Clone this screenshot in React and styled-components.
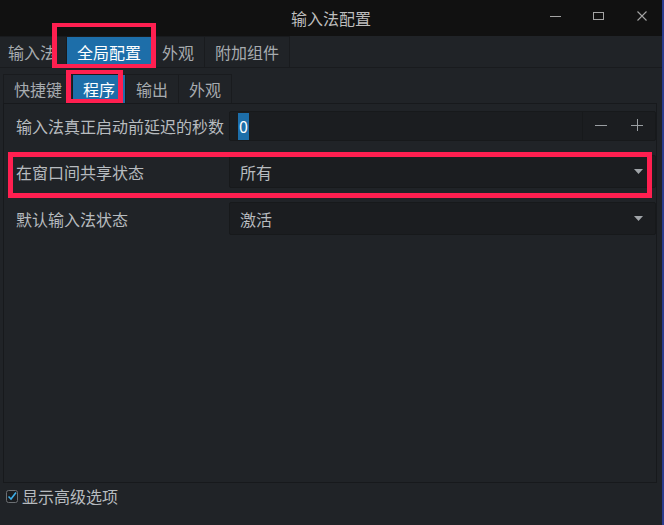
import React from "react";
import styled, { createGlobalStyle } from "styled-components";

const Global = createGlobalStyle`
  html, body { margin: 0; padding: 0; background: #202327; overflow: hidden; }
  #root { width: 664px; height: 525px; }
  * { box-sizing: border-box; }
`;

const Screen = styled.div`
  display: flex;
  width: 664px;
  height: 525px;
  font-family: "Noto Sans CJK SC", "Noto Sans", sans-serif;
  font-size: 16px;
`;

const Window = styled.div`
  position: relative;
  width: 662px;
  height: 525px;
  background: #202327;
  display: flex;
  flex-direction: column;
  overflow: hidden;
`;

const DesktopEdge = styled.div`
  width: 2px;
  background: #2a3b8e;
`;

const TitleBar = styled.div`
  height: 36px;
  flex: none;
  background: #111111;
  display: grid;
  grid-template-columns: 1fr auto 1fr;
  align-items: center;
`;

const Title = styled.div`
  grid-column: 2;
  color: #bdbdbd;
  line-height: 1;
  margin-top: 0px;
`;

const Controls = styled.div`
  grid-column: 3;
  justify-self: end;
  display: flex;
  gap: 2px;
  height: 36px;
`;

const CtrlButton = styled.div`
  width: 41px;
  display: flex;
  align-items: center;
  justify-content: center;
  padding-bottom: 4px;
  color: #a4a4a4;
`;

const TopTabBar = styled.div`
  height: 32px;
  flex: none;
  display: flex;
  align-items: flex-end;
  margin-left: -2px;
  border-bottom: 1px solid #191b1e;
`;

const Tab = styled.div`
  height: ${(p) => p.$h}px;
  display: flex;
  align-items: center;
  padding: 0 10px;
  border-top: 1px solid #191b1e;
  border-right: 1px solid #191b1e;
  color: ${(p) => (p.$active ? "#ffffff" : "#a7abaf")};
  background: ${(p) => (p.$active ? "#1d6ea9" : "transparent")};
  white-space: nowrap;
  line-height: 1;
`;

const Page = styled.div`
  flex: none;
  display: flex;
  flex-direction: column;
  padding: 0 5px 0 3px;
`;

const SubTabBar = styled.div`
  height: 35px;
  display: flex;
  align-items: flex-end;
  & > :first-child { border-left: 1px solid #191b1e; }
`;

const Panel = styled.div`
  height: 380px;
  border: 1px solid #17191c;
  padding: 7px 0 0 12px;
  display: grid;
  grid-template-columns: 213px 1fr;
  grid-auto-rows: min-content;
  row-gap: 14px;
  align-items: center;
`;

const Label = styled.div`
  color: #b7bbbf;
  white-space: nowrap;
  line-height: 1;
`;

const Field = styled.div`
  height: ${(p) => p.$h}px;
  display: flex;
  align-items: center;
  background: #1b1d20;
  border: 1px solid #17191b;
  border-radius: 2px;
  color: #b7bbbf;
`;

const SpinValue = styled.div`
  flex: 1;
  align-self: stretch;
  display: flex;
  align-items: center;
  padding-left: 8px;
`;

const Selection = styled.span`
  background: #1d6ea9;
  color: #ffffff;
  height: 27px;
  display: flex;
  align-items: center;
  padding: 0 1px;
  line-height: 1;
`;

const SpinButtons = styled.div`
  align-self: stretch;
  display: flex;
  border-left: 1px solid #17191b;
`;

const SpinButton = styled.div`
  width: 36px;
  display: flex;
  align-items: center;
  justify-content: center;
  color: #9a9ea2;
  padding-bottom: 2px;
`;

const ComboText = styled.div`
  flex: 1;
  padding-left: 10px;
  line-height: 1;
`;

const ComboArrow = styled.div`
  padding-right: 12px;
  display: flex;
  align-items: center;
  color: #a0a4a8;
`;

const Footer = styled.div`
  flex: 1;
  display: flex;
  align-items: flex-start;
  padding: 7px 0 0 6px;
  gap: 4px;
  color: #b7bbbf;
`;

const CheckLabel = styled.div`
  line-height: 13px;
  white-space: nowrap;
`;

const Annotation = styled.div`
  position: absolute;
  left: ${(p) => p.$x}px;
  top: ${(p) => p.$y}px;
  width: ${(p) => p.$w}px;
  height: ${(p) => p.$h}px;
  border-style: solid;
  border-color: #ff1f50;
  border-width: ${(p) => p.$bw};
  pointer-events: none;
`;

const Arrow = () => (
  <svg width="9" height="5" viewBox="0 0 9 5">
    <path d="M0 0 H9 L4.5 5 Z" fill="currentColor" />
  </svg>
);

const Combo = ({ children }) => (
  <Field $h={33}>
    <ComboText>{children}</ComboText>
    <ComboArrow>
      <Arrow />
    </ComboArrow>
  </Field>
);

export default function App() {
  return (
    <>
      <Global />
      <Screen>
        <Window>
          <TitleBar>
            <Title>输入法配置</Title>
            <Controls>
              <CtrlButton>
                <svg width="11" height="11" viewBox="0 0 11 11">
                  <path d="M0 5.5 H11" stroke="currentColor" strokeWidth="1" />
                </svg>
              </CtrlButton>
              <CtrlButton>
                <svg width="11" height="9" viewBox="0 0 11 9">
                  <rect x="0.5" y="0.5" width="10" height="7" fill="none" stroke="currentColor" strokeWidth="1" />
                </svg>
              </CtrlButton>
              <CtrlButton>
                <svg width="10" height="10" viewBox="0 0 10 10">
                  <path d="M0.5 0.5 L9.5 9.5 M9.5 0.5 L0.5 9.5" stroke="currentColor" strokeWidth="1.1" />
                </svg>
              </CtrlButton>
            </Controls>
          </TitleBar>

          <TopTabBar>
            <Tab $h={31}>输入法</Tab>
            <Tab $h={31} $active>全局配置</Tab>
            <Tab $h={31}>外观</Tab>
            <Tab $h={31}>附加组件</Tab>
          </TopTabBar>

          <Page>
            <SubTabBar>
              <Tab $h={29}>快捷键</Tab>
              <Tab $h={29} $active>程序</Tab>
              <Tab $h={29}>输出</Tab>
              <Tab $h={29}>外观</Tab>
            </SubTabBar>

            <Panel>
              <Label>输入法真正启动前延迟的秒数</Label>
              <Field $h={30}>
                <SpinValue>
                  <Selection>0</Selection>
                </SpinValue>
                <SpinButtons>
                  <SpinButton>
                    <svg width="12" height="12" viewBox="0 0 12 12">
                      <path d="M0 6.5 H12" stroke="currentColor" strokeWidth="1" />
                    </svg>
                  </SpinButton>
                  <SpinButton>
                    <svg width="12" height="12" viewBox="0 0 12 12">
                      <path d="M0 6.5 H12 M6.5 0 V12" stroke="currentColor" strokeWidth="1" />
                    </svg>
                  </SpinButton>
                </SpinButtons>
              </Field>

              <Label>在窗口间共享状态</Label>
              <Combo>所有</Combo>

              <Label>默认输入法状态</Label>
              <Combo>激活</Combo>
            </Panel>
          </Page>

          <Footer>
            <svg width="12" height="13" viewBox="0 0 12 13">
              <rect x="0.5" y="0.5" width="11" height="12" rx="2" fill="#1b1d20" stroke="#6c7074" />
              <path d="M2.5 6.5 L5 9 L10 2.5" fill="none" stroke="#3daee9" strokeWidth="1.6" />
            </svg>
            <CheckLabel>显示高级选项</CheckLabel>
          </Footer>

          <Annotation $x={52} $y={23} $w={104} $h={45} $bw="4px 5px" />
          <Annotation $x={66} $y={70} $w={57} $h={33} $bw="4px 5px" />
          <Annotation $x={8} $y={152} $w={644} $h={46} $bw="5px" />
        </Window>
        <DesktopEdge />
      </Screen>
    </>
  );
}
